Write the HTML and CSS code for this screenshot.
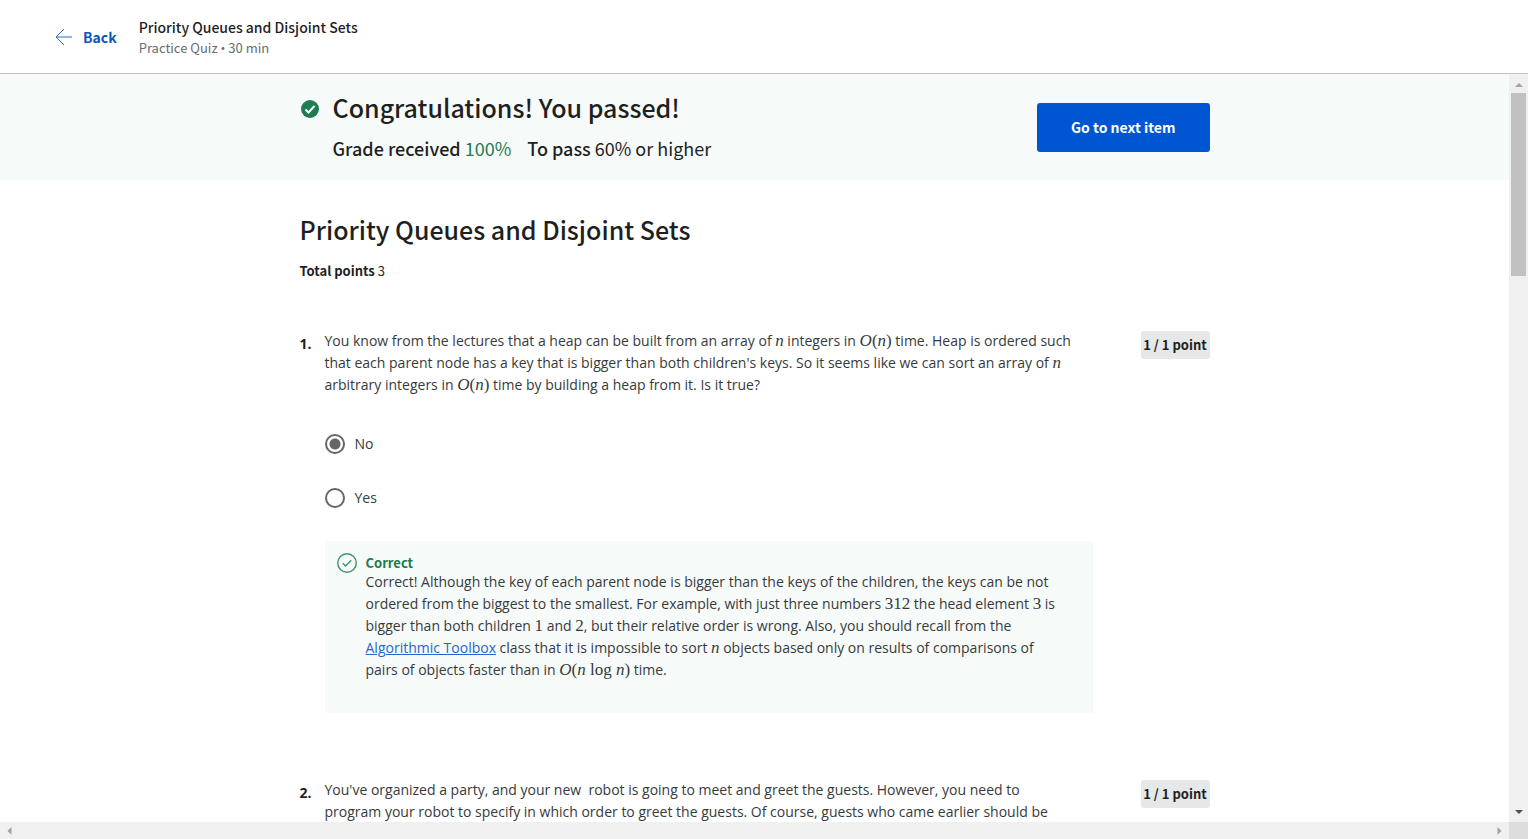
FILE: index.html
```html
<!DOCTYPE html>
<html lang="en">
<head>
<meta charset="utf-8">
<title>Priority Queues and Disjoint Sets</title>
<link rel="stylesheet" href="styles.css">
</head>
<body>
<header class="topbar">
  <a class="back" href="#">
    <svg class="back-icon" viewBox="0 0 18 18" aria-hidden="true"><path d="M9 1 1 9l8 8M1 9h16"/></svg>
    Back
  </a>
  <div class="item-info">
    <div class="item-name">Priority Queues and Disjoint Sets</div>
    <div class="item-meta">Practice Quiz <span class="bullet">•</span> 30 min</div>
  </div>
</header>
<div class="viewport">
  <main class="page">
    <section class="banner">
      <div class="container banner-row">
        <svg class="passed-icon" viewBox="0 0 18 18" aria-hidden="true"><circle cx="9" cy="9" r="9"/><path d="m4.500 9.500 3 3 6-6.500"/></svg>
        <div class="banner-text">
          <h1 class="heading">Congratulations! You passed!</h1>
          <p class="grades"><span><b class="label">Grade received</b> <span class="score">100%</span></span><span><b class="label">To pass</b> 60% or higher</span></p>
        </div>
        <button class="next" type="button">Go to next item</button>
      </div>
    </section>
    <div class="container quiz">
      <h2 class="heading">Priority Queues and Disjoint Sets</h2>
      <p class="total"><b>Total points</b> 3</p>
      <section class="question">
        <div class="number">1.</div>
        <div class="body">
          <p class="prose prompt" id="q1">You know from the lectures that a heap can be built from an array of <span class="math"><i>n</i></span> integers in <span class="math"><i>O</i>(<i>n</i>)</span> time. Heap is ordered such that each parent node has a key that is bigger than both children's keys. So it seems like we can sort an array of <span class="math"><i>n</i></span> arbitrary integers in <span class="math"><i>O</i>(<i>n</i>)</span> time by building a heap from it. Is it true?</p>
          <div class="options" role="radiogroup" aria-labelledby="q1">
            <label class="option"><input class="radio" type="radio" name="q1" checked><span>No</span></label>
            <label class="option"><input class="radio" type="radio" name="q1"><span>Yes</span></label>
          </div>
          <div class="feedback">
            <svg class="correct-icon" viewBox="0 0 20 20" aria-hidden="true"><circle cx="10" cy="10" r="9.300"/><path d="m5.800 10.200 2.800 2.800 5.600-5.800"/></svg>
            <div>
              <div class="verdict">Correct</div>
              <p class="prose">Correct! Although the key of each parent node is bigger than the keys of the children, the keys can be not ordered from the biggest to the smallest. For example, with just three numbers <span class="math">312</span> the head element <span class="math">3</span> is bigger than both children <span class="math">1</span> and <span class="math">2</span>, but their relative order is wrong. Also, you should recall from the <a class="link" href="#">Algorithmic Toolbox</a> class that it is impossible to sort <span class="math"><i>n</i></span> objects based only on results of comparisons of pairs of objects faster than in <span class="math"><i>O</i>(<i>n</i> log <i>n</i>)</span> time.</p>
            </div>
          </div>
        </div>
        <div class="points">1 / 1 point</div>
      </section>
      <section class="question">
        <div class="number">2.</div>
        <div class="body">
          <p class="prose prompt">You've organized a party, and your new &nbsp;robot is going to meet and greet the guests. However, you need to program your robot to specify in which order to greet the guests. Of course, guests who came earlier should be</p>
        </div>
        <div class="points">1 / 1 point</div>
      </section>
    </div>
  </main>
  <div class="track-v" aria-hidden="true">
    <svg class="arrow" viewBox="0 0 8 4"><path d="M4 0 8 4H0z"/></svg>
    <div class="thumb"></div>
    <svg class="arrow dark" viewBox="0 0 8 4"><path d="M0 0h8L4 4z"/></svg>
  </div>
  <div class="track-h" aria-hidden="true">
    <svg class="arrow side" viewBox="0 0 4 8"><path d="M4 0v8L0 4z"/></svg>
    <svg class="arrow side" viewBox="0 0 4 8"><path d="M0 0v8l4-4z"/></svg>
  </div>
  <div class="corner" aria-hidden="true"></div>
</div>
</body>
</html>
```
FILE: styles.css
```css
* { box-sizing: border-box; }

body {
  margin: 0;
  height: 100vh;
  display: flex;
  flex-direction: column;
  overflow: hidden;
  background: #fff;
  color: #1f1f1f;
  font-family: "Noto Sans CJK SC", "Open Sans", sans-serif;
  font-size: 14px;
}

h1, h2, p { margin: 0; }

.topbar {
  display: flex;
  align-items: center;
  gap: 22px;
  height: 74px;
  flex: none;
  padding: 0 55px;
  border-bottom: 1px solid #c4c4c4;
}

.back {
  display: flex;
  align-items: center;
  gap: 10px;
  color: #0f56b8;
  font-size: 14px;
  font-weight: 700;
  text-decoration: none;
}

.back-icon {
  width: 18px;
  height: 18px;
  fill: none;
  stroke: #2a6cc8;
}

.item-name {
  font-size: 14px;
  line-height: 22px;
  font-weight: 500;
}

.item-meta {
  color: #6b6b6b;
  font-size: 13px;
  line-height: 20px;
}

.bullet {
  font-family: "Open Sans", sans-serif;
  line-height: 1;
}

.viewport {
  flex: 1;
  min-height: 0;
  display: grid;
  grid-template-columns: 1fr 19px;
  grid-template-rows: 1fr 17px;
}

.page { overflow: hidden; }

.container {
  width: 100%;
  max-width: 910px;
  margin: 0 auto;
}

.banner {
  background: #f6fbfa;
  padding: 16px 0;
}

.banner-row {
  display: flex;
  align-items: flex-start;
  gap: 14px;
}

.passed-icon {
  width: 18px;
  height: 18px;
  margin: 10px 0 0 1px;
  fill: #1d7c50;
}

.passed-icon path {
  fill: none;
  stroke: #fff;
  stroke-width: 2;
}

.banner-text { flex: 1; }

.heading {
  font-size: 25px;
  line-height: 34px;
  font-weight: 500;
}

.grades {
  display: flex;
  gap: 16px;
  padding: 10px 0 2px;
  font-size: 18px;
  line-height: 28px;
}

.label { font-weight: 500; }

.score { color: #1d7c50; }

.next {
  align-self: center;
  height: 49px;
  padding: 0 34px;
  border: 0;
  border-radius: 3px;
  background: #0056d2;
  color: #fff;
  font: 700 14px "Noto Sans CJK SC", sans-serif;
}

.quiz { padding-top: 32px; }

.total {
  margin-top: 15px;
  font-size: 13px;
  line-height: 20px;
}

.question {
  display: grid;
  grid-template-columns: 25px 1fr 69px;
  align-items: start;
  margin-top: 49px;
}

.question + .question { margin-top: 66px; }

.number {
  padding-top: 3px;
  font: 700 14px/22px "Open Sans", sans-serif;
}

.body { margin-right: 48px; }

.prose {
  color: #373a3c;
  font-family: "Open Sans", sans-serif;
  font-size: 14px;
  line-height: 22px;
}

.prompt { padding-right: 16px; }

.math {
  font-family: "Liberation Serif", serif;
  font-size: 17px;
  line-height: 1;
  white-space: nowrap;
}

.options {
  display: grid;
  gap: 32px;
  margin-top: 37px;
}

.option {
  display: flex;
  align-items: center;
  gap: 10px;
  color: #373a3c;
  font: 14px/22px "Open Sans", sans-serif;
}

.radio {
  appearance: none;
  width: 20px;
  height: 20px;
  margin: 0;
  border: 2px solid #666;
  border-radius: 50%;
}

.radio:checked {
  background: radial-gradient(circle, #666 5px, transparent 6px);
}

.feedback {
  display: flex;
  align-items: flex-start;
  gap: 9px;
  margin-top: 32px;
  padding: 12px 28px 32px 12px;
  background: #f6fbfa;
}

.correct-icon {
  flex: none;
  width: 20px;
  height: 20px;
  fill: none;
  stroke: #3f9469;
  stroke-width: 1.4;
}

.verdict {
  color: #1d7c50;
  font-size: 13px;
  line-height: 18px;
  padding-top: 1px;
  margin-bottom: -1px;
  font-weight: 700;
}

.link { color: #2a63cf; }

.points {
  margin-top: 1px;
  padding: 4px 0;
  border-radius: 3px;
  background: #e5e7e8;
  font-size: 13px;
  line-height: 20px;
  font-weight: 700;
  text-align: center;
  white-space: nowrap;
}

.track-v {
  display: flex;
  flex-direction: column;
  align-items: center;
  padding: 9px 0 8px;
  background: #f0f0f0;
}

.thumb {
  width: 15px;
  height: 25%;
  margin: 6px 0 auto;
  background: #c1c1c1;
}

.arrow {
  width: 8px;
  height: 4px;
  fill: #a3a3a3;
}

.dark { fill: #505050; }

.side {
  width: 5px;
  height: 8px;
}

.track-h {
  display: flex;
  align-items: center;
  justify-content: space-between;
  padding: 0 7px;
  background: #f0f0f0;
}

.corner { background: #dcdcdc; }
```
